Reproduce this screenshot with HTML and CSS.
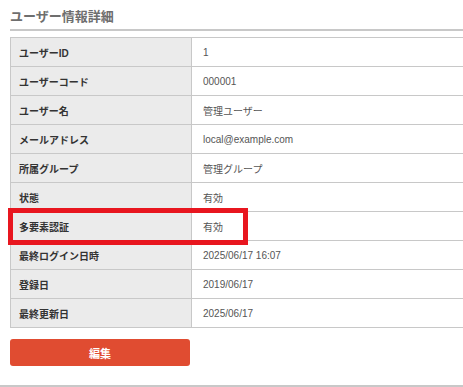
FILE: index.html
```html
<!DOCTYPE html>
<html lang="ja">
<head>
    <meta charset="UTF-8">
    <meta name="viewport" content="width=device-width, initial-scale=1.0">
    <title>ユーザー情報詳細</title>
    <link rel="stylesheet" href="styles.css">
</head>
<body>
    <main class="content">
        <h2 class="page-title">ユーザー情報詳細</h2>

        <div class="detail-wrap">
            <table class="detail-table">
                <colgroup>
                    <col class="label-col">
                    <col>
                </colgroup>
                <tr><th>ユーザーID</th><td>1</td></tr>
                <tr><th>ユーザーコード</th><td>000001</td></tr>
                <tr><th>ユーザー名</th><td>管理ユーザー</td></tr>
                <tr><th>メールアドレス</th><td>local@example.com</td></tr>
                <tr><th>所属グループ</th><td>管理グループ</td></tr>
                <tr><th>状態</th><td>有効</td></tr>
                <tr><th>多要素認証</th><td>有効</td></tr>
                <tr><th>最終ログイン日時</th><td>2025/06/17 16:07</td></tr>
                <tr><th>登録日</th><td>2019/06/17</td></tr>
                <tr><th>最終更新日</th><td>2025/06/17</td></tr>
            </table>
            <!-- annotation box -->
            <div class="highlight"></div>
        </div>

        <button class="edit-btn" type="button">編集</button>
    </main>
    <hr class="bottom-line">
</body>
</html>
```

FILE: styles.css
```css
html, body {
    margin: 0;
    padding: 0;
    background: #fff;
}

body {
    font-family: "Liberation Sans", "Noto Sans CJK JP", sans-serif;
    color: #333;
}

.content {
    padding: 8px 0 0 10px;
}

.page-title {
    margin: 0;
    padding-bottom: 3px;
    font-size: 13px;
    line-height: 18px;
    font-weight: bold;
    color: #6e6e6e;
    border-bottom: 2px solid #c8c8c8;
}

.detail-wrap {
    position: relative;
    margin-top: 6px;
}

.detail-table {
    border-collapse: collapse;
    table-layout: fixed;
    width: 100%;
    font-size: 10px;
}

.label-col {
    width: 181px;
}

.detail-table th,
.detail-table td {
    border: 1px solid #c8c8c8;
    height: 29px;
    padding: 0;
    box-sizing: border-box;
    text-align: left;
    white-space: nowrap;
}

.detail-table th {
    background-color: #ebebeb;
    padding-left: 8px;
    font-weight: bold;
    color: #333;
}

.detail-table td {
    padding-left: 11px;
    color: #555;
    border-right: none;
}

.highlight {
    position: absolute;
    left: -2px;
    top: 171px;
    width: 240px;
    height: 37px;
    box-sizing: border-box;
    border: 5px solid #e8161f;
}

.edit-btn {
    display: block;
    margin-top: 11px;
    width: 180px;
    height: 27px;
    border: none;
    border-radius: 3px;
    background-color: #e04c31;
    color: #fff;
    font-family: "Liberation Sans", "Noto Sans CJK JP", sans-serif;
    font-size: 11px;
    font-weight: bold;
    cursor: pointer;
}

.bottom-line {
    margin: 19px 0 0;
    border: none;
    border-top: 2px solid #c8c8c8;
    height: 0;
}
```
